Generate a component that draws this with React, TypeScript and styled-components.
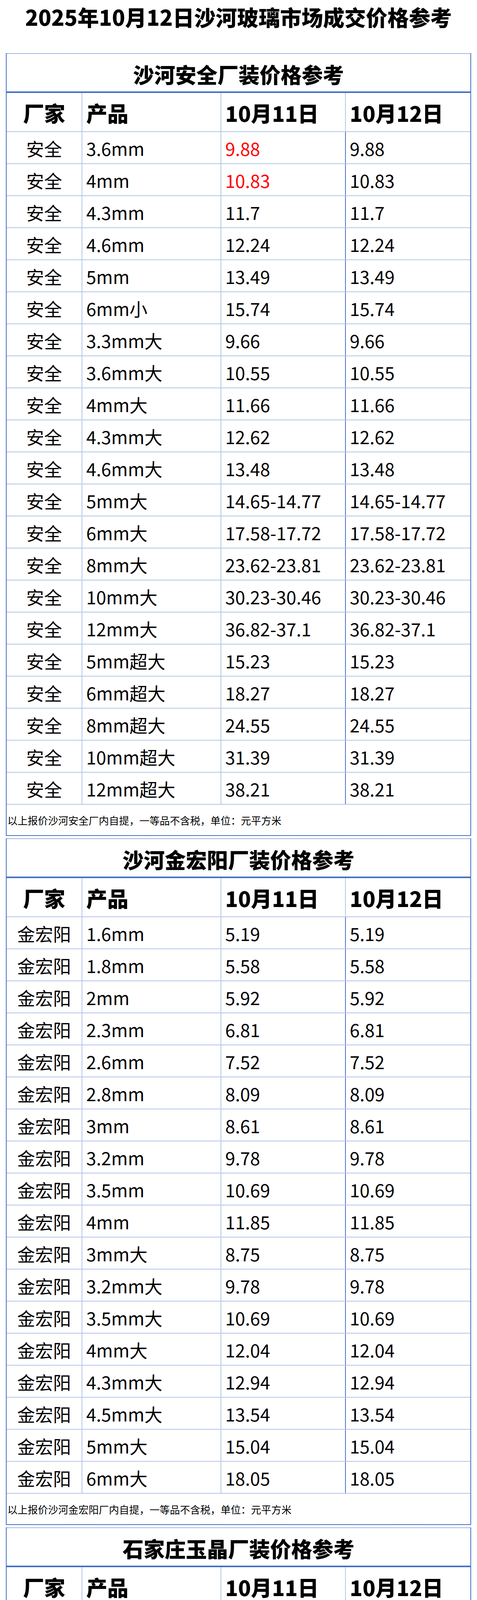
import { createGlobalStyle, styled } from 'styled-components';

type PriceRow = {
  product: string;
  prev: string;
  today: string;
  // 前一天价格是否标红
  hot?: boolean;
};

type PriceSection = {
  title: string;
  maker: string;
  note: string;
  rows: PriceRow[];
};

const same = (product: string, price: string, hot?: boolean): PriceRow => ({
  product,
  prev: price,
  today: price,
  hot,
});

const SECTIONS: PriceSection[] = [
  {
    title: '沙河安全厂装价格参考',
    maker: '安全',
    note: '以上报价沙河安全厂内自提，一等品不含税，单位：元平方米',
    rows: [
      same('3.6mm', '9.88', true),
      same('4mm', '10.83', true),
      same('4.3mm', '11.7'),
      same('4.6mm', '12.24'),
      same('5mm', '13.49'),
      same('6mm小', '15.74'),
      same('3.3mm大', '9.66'),
      same('3.6mm大', '10.55'),
      same('4mm大', '11.66'),
      same('4.3mm大', '12.62'),
      same('4.6mm大', '13.48'),
      same('5mm大', '14.65-14.77'),
      same('6mm大', '17.58-17.72'),
      same('8mm大', '23.62-23.81'),
      same('10mm大', '30.23-30.46'),
      same('12mm大', '36.82-37.1'),
      same('5mm超大', '15.23'),
      same('6mm超大', '18.27'),
      same('8mm超大', '24.55'),
      same('10mm超大', '31.39'),
      same('12mm超大', '38.21'),
    ],
  },
  {
    title: '沙河金宏阳厂装价格参考',
    maker: '金宏阳',
    note: '以上报价沙河金宏阳厂内自提，一等品不含税，单位：元平方米',
    rows: [
      same('1.6mm', '5.19'),
      same('1.8mm', '5.58'),
      same('2mm', '5.92'),
      same('2.3mm', '6.81'),
      same('2.6mm', '7.52'),
      same('2.8mm', '8.09'),
      same('3mm', '8.61'),
      same('3.2mm', '9.78'),
      same('3.5mm', '10.69'),
      same('4mm', '11.85'),
      same('3mm大', '8.75'),
      same('3.2mm大', '9.78'),
      same('3.5mm大', '10.69'),
      same('4mm大', '12.04'),
      same('4.3mm大', '12.94'),
      same('4.5mm大', '13.54'),
      same('5mm大', '15.04'),
      same('6mm大', '18.05'),
    ],
  },
  {
    title: '石家庄玉晶厂装价格参考',
    maker: '玉晶',
    note: '以上报价石家庄玉晶厂内自提，一等品不含税，单位：元平方米',
    rows: [
      same('4mm大', '11.63'),
      same('4.3mm大', '12.5'),
      same('5mm大', '14.54'),
      same('6mm大', '17.44'),
      same('7.2mm大', '20.93'),
      same('7.5mm大', '21.8'),
      same('8mm大', '23.45'),
      same('10mm大', '29.55'),
      same('12mm大', '36.04'),
    ],
  },
];

const BLUE = '#4472c4';
const LIGHT = '#b4c6e7';

const GlobalStyle = createGlobalStyle`
  * {
    box-sizing: border-box;
  }

  body {
    margin: 0;
    background: #ffffff;
    color: #000000;
    font-family: 'Noto Sans CJK SC', 'Noto Sans', sans-serif;
  }
`;

const Page = styled.main`
  display: flex;
  flex-direction: column;
  gap: 6px;

  width: 1222px;
  padding: 0 15px;
`;

const PageTitle = styled.h1`
  height: 130px;
  margin: 0;
  padding-top: 9px;

  font-size: 55px;
  font-weight: 900;
  line-height: 66px;
  text-align: center;
  white-space: nowrap;
`;

const Section = styled.section`
  display: flex;
  flex-direction: column;

  border-left: 2px solid ${BLUE};
  border-right: 2px solid ${BLUE};
  border-bottom: 2px solid ${BLUE};
`;

// 标题框：上左右是点线，下边是粗实线
const SectionTitle = styled.h2`
  display: flex;
  justify-content: center;
  align-items: center;

  height: 102px;
  margin: 0 -2px;
  padding-top: 6px;

  border-top: 2px dotted ${BLUE};
  border-left: 2px dotted ${BLUE};
  border-right: 2px dotted ${BLUE};
  border-bottom: 4px solid ${BLUE};

  font-size: 54px;
  font-weight: 900;
  white-space: nowrap;
`;

const Row = styled.div<{ $head?: boolean }>`
  display: grid;
  grid-template-columns: 194px 356px 319px 1fr;

  height: ${({ $head }) => ($head ? '100px' : '82px')};

  border-bottom: 2px solid ${LIGHT};
`;

const Cell = styled.div<{ $center?: boolean; $line?: 'light' | 'dark' | 'none'; $red?: boolean }>`
  display: flex;
  align-items: center;
  justify-content: ${({ $center }) => ($center ? 'center' : 'flex-start')};

  padding-left: ${({ $center }) => ($center ? '0' : '10px')};
  padding-top: 2px;

  border-right: ${({ $line = 'light' }) =>
    $line === 'none' ? '0' : `2px solid ${$line === 'dark' ? BLUE : LIGHT}`};

  color: ${({ $red }) => ($red ? '#ff0000' : '#000000')};
  font-size: 46px;
  white-space: nowrap;
`;

const HeadCell = styled(Cell)`
  font-size: 54px;
  font-weight: 900;
`;

const Note = styled.div`
  display: flex;
  align-items: center;

  height: 78px;
  padding-left: 2px;

  font-size: 26px;
  white-space: nowrap;
`;

const PriceTable = ({ section }: { section: PriceSection }) => (
  <Section>
    <SectionTitle>{section.title}</SectionTitle>
    <Row $head>
      <HeadCell $center>厂家</HeadCell>
      <HeadCell>产品</HeadCell>
      <HeadCell>10月11日</HeadCell>
      <HeadCell $line="none">10月12日</HeadCell>
    </Row>
    {section.rows.map((row) => (
      <Row key={row.product}>
        <Cell $center>{section.maker}</Cell>
        <Cell>{row.product}</Cell>
        <Cell $line="dark" $red={row.hot}>
          {row.prev}
        </Cell>
        <Cell $line="none">{row.today}</Cell>
      </Row>
    ))}
    <Note>{section.note}</Note>
  </Section>
);

export default function App() {
  return (
    <>
      <GlobalStyle />
      <Page>
        <PageTitle>2025年10月12日沙河玻璃市场成交价格参考</PageTitle>
        {SECTIONS.map((section) => (
          <PriceTable key={section.title} section={section} />
        ))}
      </Page>
    </>
  );
}
